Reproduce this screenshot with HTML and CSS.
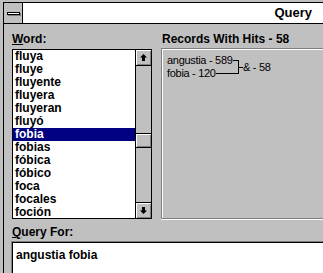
FILE: index.html
```html
<!DOCTYPE html>
<html lang="es">
<head>
  <meta charset="UTF-8" />
  <title>Query</title>
  <link rel="stylesheet" href="styles.css">
</head>
<body>
  <div class="window">
    <div class="titlebar">
      <div class="sysmenu"><span class="sysbar"></span></div>
      <div class="title">Query</div>
    </div>
    <div class="client">
      <div class="columns">
        <div class="col">
          <div class="label"><u>W</u>ord:</div>
          <div class="listbox">
            <ul class="items">
              <li>fluya</li>
              <li>fluye</li>
              <li>fluyente</li>
              <li>fluyera</li>
              <li>fluyeran</li>
              <li>fluyó</li>
              <li class="selected">fobia</li>
              <li>fobias</li>
              <li>fóbica</li>
              <li>fóbico</li>
              <li>foca</li>
              <li>focales</li>
              <li>foción</li>
            </ul>
            <div class="scrollbar">
              <div class="sbtn sbtn-up">
                <svg width="7" height="7" viewBox="0 0 7 7"><path d="M3.5 0 L7 3.5 L5 3.5 L5 7 L2 7 L2 3.5 L0 3.5 Z" fill="#000"/></svg>
              </div>
              <div class="track"><div class="thumb"></div></div>
              <div class="sbtn sbtn-down">
                <svg width="7" height="7" viewBox="0 0 7 7"><path d="M3.5 7 L7 3.5 L5 3.5 L5 0 L2 0 L2 3.5 L0 3.5 Z" fill="#000"/></svg>
              </div>
            </div>
          </div>
        </div>
        <div class="col">
          <div class="label">Records With Hits - 58</div>
          <div class="panel">
            <div class="hits">
              <div class="terms">
                <div class="term">angustia - 589</div>
                <div class="term">fobia - 120</div>
              </div>
              <div class="result">&amp; - 58</div>
            </div>
          </div>
        </div>
      </div>
      <div class="label query-label"><u>Q</u>uery For:</div>
      <div class="querybox">angustia fobia</div>
    </div>
  </div>
</body>
</html>
```

FILE: styles.css
```css
html, body {
  margin: 0;
  height: 100%;
  overflow: hidden;
}
body {
  background: #c0c0c0;
  font-family: "Liberation Sans", Arial, sans-serif;
  color: #000;
}
.window {
  height: 273px;
  padding: 2px 0 0 3px;
  box-sizing: border-box;
  overflow: hidden;
}
.titlebar {
  display: flex;
  height: 20px;
  background: #fff;
  border-top: 1px solid #000;
  border-bottom: 1px solid #000;
  border-left: 1px solid #000;
}
.sysmenu {
  width: 18px;
  background: #c0c0c0;
  border-right: 1px solid #000;
  display: flex;
  align-items: center;
  justify-content: center;
}
.sysbar {
  display: block;
  width: 11px;
  height: 1px;
  background: #fff;
  border: 1px solid #000;
  box-shadow: 1px 1px 0 #808080;
}
.title {
  flex: 1;
  text-align: right;
  padding-right: 11px;
  font-weight: bold;
  font-size: 13px;
  line-height: 20px;
}
.client {
  border-left: 1px solid #000;
  height: 260px;
  padding: 6px 0 0 7px;
}
.columns {
  display: grid;
  grid-template-columns: 142px 1fr;
  column-gap: 8px;
}
.label {
  font-weight: bold;
  font-size: 12px;
  line-height: 18px;
  height: 18px;
  padding-left: 1px;
  white-space: nowrap;
}
.listbox {
  display: flex;
  margin: 1px 0 0 1px;
  width: 140px;
  height: 170px;
  box-sizing: border-box;
  border: 1px solid #000;
  background: #fff;
}
.items {
  list-style: none;
  margin: 0;
  padding: 0;
  width: 122px;
  overflow: hidden;
  font-weight: bold;
  font-size: 12px;
}
.items li {
  height: 13px;
  line-height: 13px;
  padding-left: 2px;
  white-space: nowrap;
}
.items .selected {
  background: #000080;
  color: #fff;
}
.scrollbar {
  width: 16px;
  border-left: 1px solid #000;
  box-sizing: border-box;
  display: flex;
  flex-direction: column;
  background: #c0c0c0;
}
.sbtn {
  height: 16px;
  box-sizing: border-box;
  background: #c0c0c0;
  box-shadow: inset 1px 1px 0 #fff, inset -1px -1px 0 #808080;
  display: flex;
  align-items: center;
  justify-content: center;
}
.sbtn-up { border-bottom: 1px solid #000; }
.sbtn-down { border-top: 1px solid #000; }
.track {
  flex: 1;
  padding-top: 67px;
}
.thumb {
  height: 15px;
  box-sizing: border-box;
  border-top: 1px solid #000;
  border-bottom: 1px solid #000;
  box-shadow: inset 1px 1px 0 #fff, inset -1px -1px 0 #808080;
}
.panel {
  height: 171px;
  box-sizing: border-box;
  margin-right: -4px;
  border: 1px solid #808080;
  box-shadow: inset 1px 1px 0 #fff, 0 1px 0 #fff;
  padding: 5px 0 0 5px;
}
.hits {
  display: flex;
  align-items: center;
  font-size: 11px;
  letter-spacing: -0.3px;
}
.terms {
  position: relative;
  width: 72px;
}
.term {
  display: flex;
  align-items: center;
  height: 13px;
  line-height: 13px;
  white-space: nowrap;
}
.term::after {
  content: "";
  flex: 1;
  border-top: 1px solid #000;
}
.terms::after {
  content: "";
  position: absolute;
  right: 0;
  top: 6px;
  bottom: 6px;
  border-right: 1px solid #000;
}
.result {
  display: flex;
  align-items: center;
  white-space: nowrap;
}
.result::before {
  content: "";
  width: 4px;
  border-top: 1px solid #000;
}
.query-label {
  margin-top: 5px;
  height: 17px;
  line-height: 17px;
}
.querybox {
  margin-right: -4px;
  height: 40px;
  border: 1px solid #808080;
  box-shadow: inset 1px 1px 0 #000;
  background: #fff;
  padding: 5px 0 0 4px;
  font-weight: bold;
  font-size: 12px;
  line-height: 16px;
}
```
